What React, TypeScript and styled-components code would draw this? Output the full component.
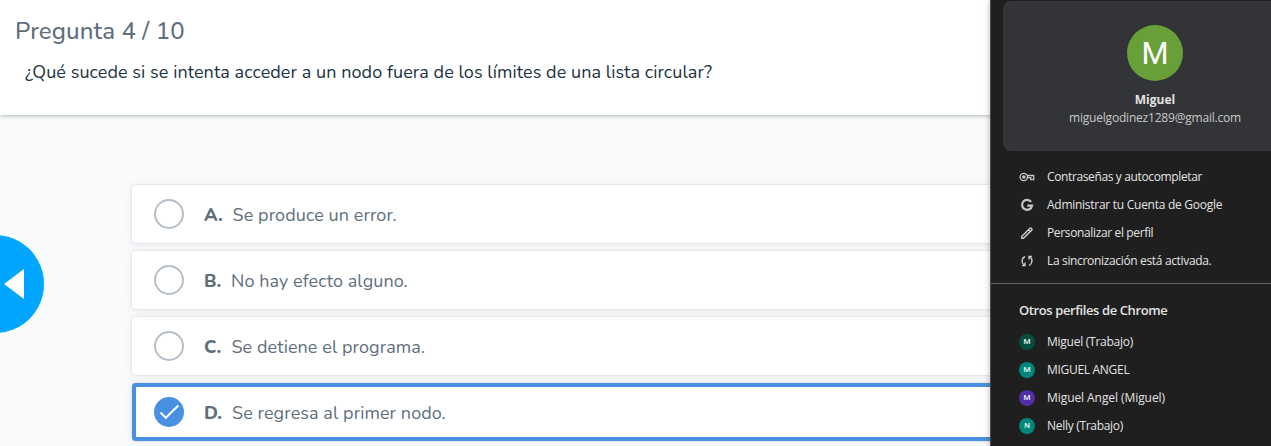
import React from "react";
import styled, { createGlobalStyle } from "styled-components";

const GlobalStyle = createGlobalStyle`
  * { box-sizing: border-box; }
  body {
    margin: 0;
    background: #f8fafc;
    overflow: hidden;
    font-family: Nunito, Lato, "Open Sans", sans-serif;
  }
`;

const Page = styled.div`
  position: relative;
  display: flex;
  flex-direction: column;
  height: 446px;
  overflow: hidden;
  background: #f9fafc;
`;

const Header = styled.header`
  height: 115px;
  flex: none;
  padding: 14px 15px 0;
  background: #fff;
  box-shadow: 0 1px 4px rgba(30, 55, 50, 0.32);
`;

const Progress = styled.h1`
  margin: 0;
  font-size: 24px;
  font-weight: 500;
  line-height: 34px;
  letter-spacing: 0.1px;
  color: #5f6f7d;
`;

const Question = styled.p`
  margin: 11px 0 0 10px;
  font-size: 18px;
  line-height: 26px;
  letter-spacing: 0.07px;
  white-space: nowrap;
  color: #1d3441;
`;

const Quiz = styled.main`
  display: flex;
  padding-top: 70px;
`;

const Rail = styled.div`
  width: 132px;
  flex: none;
  padding-top: 50px;
`;

const PreviousButton = styled.button`
  display: flex;
  align-items: center;
  width: 98px;
  height: 98px;
  margin-left: -54px;
  padding: 0 0 0 58px;
  border: 0;
  border-radius: 50%;
  background: #00a6ff;
`;

const Answers = styled.div`
  display: flex;
  flex: 1;
  flex-direction: column;
  gap: 8px;
`;

const Answer = styled.div<{ $selected?: boolean }>`
  display: flex;
  align-items: center;
  height: 58px;
  padding-left: ${(p) => (p.$selected ? 18 : 22)}px;
  border: ${(p) => (p.$selected ? "4px solid #4990e2" : "0")};
  border-radius: 4px;
  background: #fff;
  box-shadow: 0 0 2px rgba(40, 65, 75, 0.22), 0 1px 8px rgba(40, 65, 75, 0.08);
`;

const Radio = styled.span<{ $selected?: boolean }>`
  display: flex;
  align-items: center;
  justify-content: center;
  width: 30px;
  height: 30px;
  flex: none;
  border: ${(p) => (p.$selected ? "0" : "2px solid #b7bfc6")};
  border-radius: 50%;
  background: ${(p) => (p.$selected ? "#4990e2" : "#fff")};
`;

const Letter = styled.b<{ $width: number }>`
  width: ${(p) => p.$width}px;
  flex: none;
  margin-left: 20px;
  padding-top: 2px;
  font-size: 18px;
  font-weight: 800;
  letter-spacing: 0.1px;
  color: #5f6f7d;
`;

const AnswerText = styled.span`
  padding-top: 2px;
  font-size: 18px;
  letter-spacing: 0.08px;
  white-space: nowrap;
  color: #5f6f7d;
`;

const ProfileMenu = styled.aside`
  position: absolute;
  top: 0;
  left: 990px;
  width: 330px;
  height: 446px;
  border-left: 1px solid #4b4d4e;
  background: #1f1f1f;
  box-shadow: 0 0 6px rgba(0, 0, 0, 0.3);
  color: #e3e3e3;
  font-family: "Segoe UI", "Open Sans", "Noto Sans", sans-serif;
`;

const AccountCard = styled.section`
  display: flex;
  flex-direction: column;
  align-items: center;
  width: 304px;
  height: 150px;
  margin: 1px 0 0 12px;
  padding-top: 24px;
  border-radius: 8px;
  background: #333438;
`;

const BigAvatar = styled.div`
  width: 56px;
  height: 56px;
  border-radius: 50%;
  background: #689f38;
  color: #fff;
  font: 400 31px/58px Roboto, sans-serif;
  text-align: center;
`;

const Name = styled.div`
  margin-top: 10px;
  font-size: 12px;
  font-weight: 700;
  line-height: 18px;
`;

const Email = styled.div`
  font-size: 12px;
  line-height: 18px;
  letter-spacing: -0.2px;
  color: #c7c7c7;
`;

const MenuList = styled.ul`
  margin: 0;
  padding: 12px 0 8px;
  list-style: none;
`;

const ProfileList = styled(MenuList)`
  padding: 8px 0 0;
`;

const MenuItem = styled.li`
  display: flex;
  align-items: center;
  gap: 12px;
  height: 28px;
  padding-left: 28px;

  svg { flex: none; }
`;

const ItemLabel = styled.span<{ $spacing: number }>`
  padding-bottom: 1px;
  font-size: 12px;
  line-height: 16px;
  letter-spacing: ${(p) => p.$spacing}px;
  white-space: nowrap;
`;

const OtherProfiles = styled.section`
  border-top: 1px solid #626262;
  padding-top: 16px;
`;

const SectionTitle = styled.h2`
  margin: 0 0 0 28px;
  font-size: 13px;
  font-weight: 600;
  line-height: 20px;
  letter-spacing: -0.4px;
`;

const SmallAvatar = styled.span<{ $color: string }>`
  width: 16px;
  height: 16px;
  border-radius: 50%;
  background: ${(p) => p.$color};
  color: #e8f3f1;
  font: 500 8px/16px Roboto, sans-serif;
  text-align: center;
`;

const KeyIcon = () => (
  <svg width="16" height="16" viewBox="0 0 16 16" fill="none" stroke="#c7c7c7" strokeWidth="1.3">
    <circle cx="4.8" cy="8" r="3.7" />
    <circle cx="4.8" cy="8" r="1.8" fill="#c7c7c7" stroke="none" />
    <path d="M8 6.5h6.7v4.2h-2.9V8.7H8.4" />
  </svg>
);

const GoogleIcon = () => (
  <svg width="16" height="16" viewBox="0 0 16 16" fill="none" stroke="#c7c7c7" strokeWidth="2.2">
    <path d="M12.1 4.8A5 5 0 1 0 13 8.7H8.2" />
  </svg>
);

const PencilIcon = () => (
  <svg width="16" height="16" viewBox="0 0 16 16" fill="none" stroke="#c7c7c7" strokeWidth="1.5" strokeLinejoin="round">
    <path d="M2.7 13.3v-1.8l8.2-8.2a1 1 0 0 1 1.4 0l.4.4a1 1 0 0 1 0 1.4l-8.2 8.2z M9.4 4.6l2 2" />
  </svg>
);

const SyncIcon = () => (
  <svg width="16" height="16" viewBox="0 0 16 16" fill="none" stroke="#c7c7c7" strokeWidth="1.4">
    <path d="M6 3.5A5 5 0 0 0 5.1 12.1M3 12.6h3V9.6M10 12.5A5 5 0 0 0 10.9 3.9M13 3.4H10v3" />
  </svg>
);

const answers = [
  { letter: "A.", text: "Se produce un error.", width: 28.6 },
  { letter: "B.", text: "No hay efecto alguno.", width: 27 },
  { letter: "C.", text: "Se detiene el programa.", width: 27.4 },
  { letter: "D.", text: "Se regresa al primer nodo.", width: 28, selected: true },
];

const actions = [
  { Icon: KeyIcon, text: "Contraseñas y autocompletar", spacing: -0.37 },
  { Icon: GoogleIcon, text: "Administrar tu Cuenta de Google", spacing: -0.27 },
  { Icon: PencilIcon, text: "Personalizar el perfil", spacing: -0.36 },
  { Icon: SyncIcon, text: "La sincronización está activada.", spacing: -0.34 },
];

const profiles = [
  { initial: "M", text: "Miguel (Trabajo)", color: "#064e42", spacing: -0.26 },
  { initial: "M", text: "MIGUEL ANGEL", color: "#00897b", spacing: -0.3 },
  { initial: "M", text: "Miguel Angel (Miguel)", color: "#512da8", spacing: -0.07 },
  { initial: "N", text: "Nelly (Trabajo)", color: "#00897b", spacing: -0.3 },
];

export default function App() {
  return (
    <Page>
      <GlobalStyle />
      <Header>
        <Progress>Pregunta 4 / 10</Progress>
        <Question>¿Qué sucede si se intenta acceder a un nodo fuera de los límites de una lista circular?</Question>
      </Header>
      <Quiz>
        <Rail>
          <PreviousButton aria-label="Anterior">
            <svg width="20" height="30" viewBox="0 0 20 30"><path d="M20 0v30L0 15z" fill="#fff" /></svg>
          </PreviousButton>
        </Rail>
        <Answers>
          {answers.map((a) => (
            <Answer key={a.letter} $selected={a.selected}>
              <Radio $selected={a.selected}>
                {a.selected && (
                  <svg width="30" height="30" viewBox="0 0 30 30" fill="none" stroke="#fff" strokeWidth="2">
                    <path d="M6.5 15.5l5.3 5.3L24.3 8.5" />
                  </svg>
                )}
              </Radio>
              <Letter $width={a.width}>{a.letter}</Letter>
              <AnswerText>{a.text}</AnswerText>
            </Answer>
          ))}
        </Answers>
      </Quiz>
      <ProfileMenu>
        <AccountCard>
          <BigAvatar>M</BigAvatar>
          <Name>Miguel</Name>
          <Email>miguelgodinez1289@gmail.com</Email>
        </AccountCard>
        <MenuList>
          {actions.map(({ Icon, text, spacing }) => (
            <MenuItem key={text}>
              <Icon />
              <ItemLabel $spacing={spacing}>{text}</ItemLabel>
            </MenuItem>
          ))}
        </MenuList>
        <OtherProfiles>
          <SectionTitle>Otros perfiles de Chrome</SectionTitle>
          <ProfileList>
            {profiles.map((p) => (
              <MenuItem key={p.text}>
                <SmallAvatar $color={p.color}>{p.initial}</SmallAvatar>
                <ItemLabel $spacing={p.spacing}>{p.text}</ItemLabel>
              </MenuItem>
            ))}
          </ProfileList>
        </OtherProfiles>
      </ProfileMenu>
    </Page>
  );
}
